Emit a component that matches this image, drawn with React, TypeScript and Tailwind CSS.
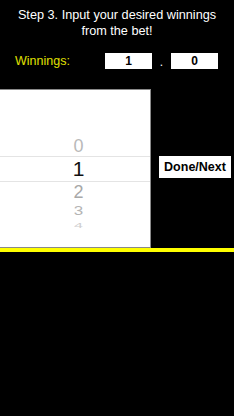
import React from "react";

const font = { fontFamily: '"Liberation Sans", Arial, sans-serif' };

export default function App() {
  return (
    <div className="w-[234px] h-[416px] bg-black flex flex-col overflow-hidden" style={font}>
      {/* header */}
      <div className="pt-[7px] text-center text-white text-[12.7px] leading-[16px]">
        Step 3. Input your desired winnings
        <br />
        from the bet!
      </div>

      {/* winnings row */}
      <div className="mt-[14px] flex items-center h-[16px]">
        <div className="ml-[15px] w-[90px] text-[#e0e000] text-[12.5px] leading-[16px]">Winnings:</div>
        <div className="w-[47px] h-[16px] bg-white text-black font-bold text-[12px] leading-[16px] text-center">1</div>
        <div className="w-[19px] text-white text-[12px] leading-[16px] text-center pt-[2px]">.</div>
        <div className="w-[47px] h-[16px] bg-white text-black font-bold text-[12px] leading-[16px] text-center">0</div>
      </div>

      {/* picker + button */}
      <div className="mt-[20px] flex items-start">
        <div className="w-[151px] h-[159px] bg-white border-t border-b border-r border-[#8a8a8a] flex flex-col">
          <div className="h-[46px]" />
          <div className="h-[20px] flex items-center justify-center pl-[7px] text-[#b9b9b9] text-[18px]">0</div>
          <div className="h-[26px] border-t border-b border-[#e4e4e4] flex items-center justify-center pl-[7px] text-[#111] text-[21px]">
            1
          </div>
          <div className="h-[20px] flex items-center justify-center pl-[7px] text-[#a8a8a8] text-[18px]">2</div>
          <div className="h-[18px] flex items-center justify-center pl-[7px] text-[#b4b4b4] text-[17px]">
            <span className="inline-block scale-y-[0.75]">3</span>
          </div>
          <div className="h-[12px] flex items-center justify-center pl-[7px] text-[#cfcfcf] text-[16px] overflow-hidden">
            <span className="inline-block scale-y-[0.45]">4</span>
          </div>
        </div>
        <div className="ml-[8px] mt-[67px] w-[72px] h-[22px] bg-white flex items-center justify-center text-black font-bold text-[12.5px]">
          Done/Next
        </div>
      </div>

      {/* yellow divider */}
      <div className="h-[4px] bg-[#ffff00]" />
    </div>
  );
}
